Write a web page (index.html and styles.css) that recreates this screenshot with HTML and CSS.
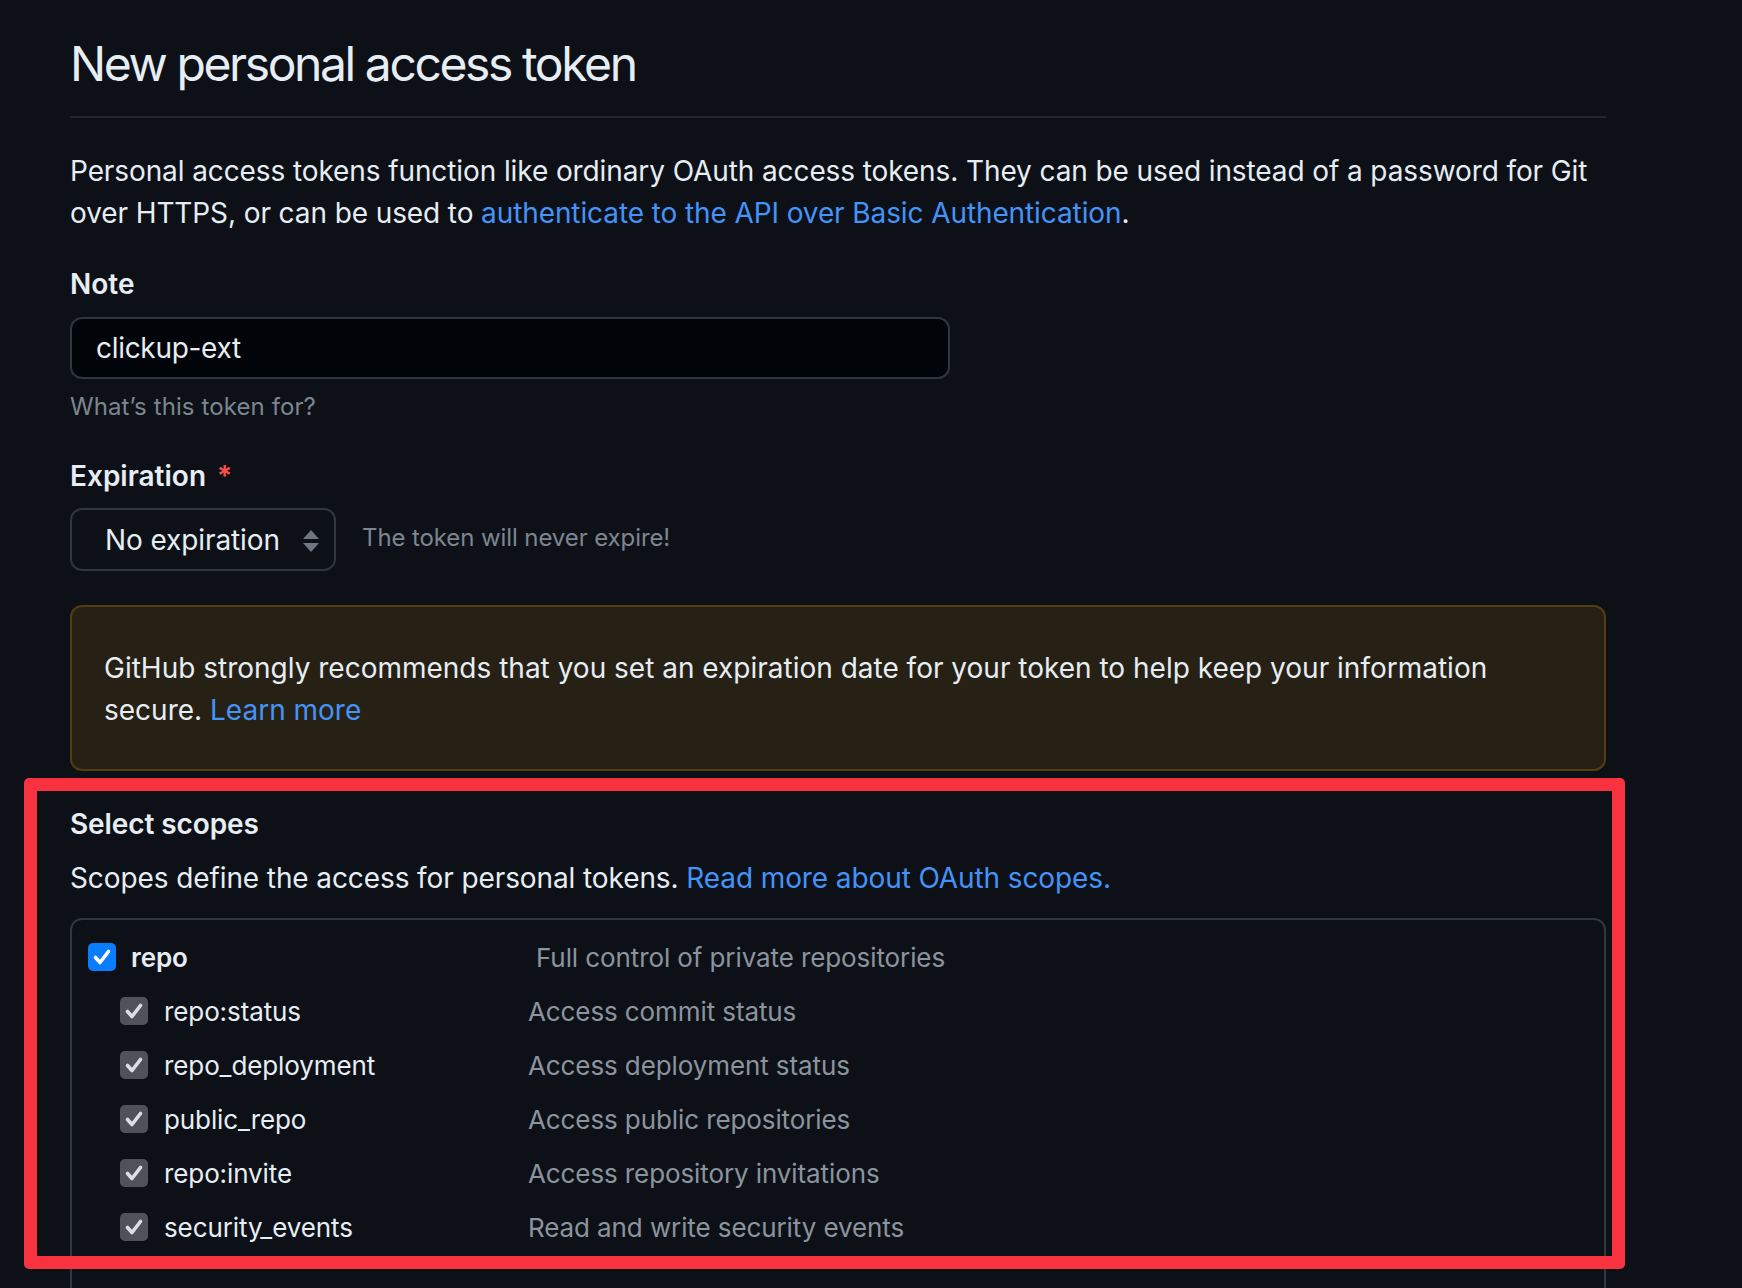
FILE: index.html
```html
<!DOCTYPE html>
<html lang="en">
<head>
<meta charset="utf-8">
<title>New personal access token</title>
<link rel="stylesheet" href="styles.css">
</head>
<body>
<main class="page">
  <h1 class="subhead">New personal access token</h1>
  <p class="lead">Personal access tokens function like ordinary OAuth access tokens. They can be used instead of a password for Git<br>over HTTPS, or can be used to <a href="#">authenticate to the API over Basic Authentication</a>.</p>

  <label class="field-label label-note">Note</label>
  <div class="input">clickup-ext</div>
  <p class="note">What’s this token for?</p>

  <label class="field-label label-exp">Expiration <span class="req">*</span></label>
  <div class="exp-row">
    <div class="select">
      <span>No expiration</span>
      <svg class="arrows" width="16" height="22" viewBox="0 0 16 22"><path d="M8 0 L16 9 L0 9 Z" fill="#6e7681"/><path d="M0 13 L16 13 L8 22 Z" fill="#6e7681"/></svg>
    </div>
    <span class="exp-note">The token will never expire!</span>
  </div>

  <div class="flash">GitHub strongly recommends that you set an expiration date for your token to help keep your information<br>secure. <a href="#">Learn more</a></div>

  <h3 class="scopes-title">Select scopes</h3>
  <p class="scopes-desc">Scopes define the access for personal tokens. <a href="#">Read more about OAuth scopes.</a></p>

  <div class="scopes">
    <div class="row row-main">
      <span class="cb cb-blue"><svg viewBox="0 0 28 28" width="28" height="28"><path d="M7.5 14.5 L12 19.5 L20.5 8.5" fill="none" stroke="#fff" stroke-width="3.6" stroke-linecap="round" stroke-linejoin="round"/></svg></span>
      <span class="name name-main">repo</span>
      <span class="desc">Full control of private repositories</span>
    </div>
    <div class="row row-sub">
      <span class="cb cb-gray"><svg viewBox="0 0 28 28" width="28" height="28"><path d="M7.5 14.5 L12 19.5 L20.5 8.5" fill="none" stroke="#dcdee2" stroke-width="3.6" stroke-linecap="round" stroke-linejoin="round"/></svg></span>
      <span class="name">repo:status</span>
      <span class="desc">Access commit status</span>
    </div>
    <div class="row row-sub">
      <span class="cb cb-gray"><svg viewBox="0 0 28 28" width="28" height="28"><path d="M7.5 14.5 L12 19.5 L20.5 8.5" fill="none" stroke="#dcdee2" stroke-width="3.6" stroke-linecap="round" stroke-linejoin="round"/></svg></span>
      <span class="name">repo_deployment</span>
      <span class="desc">Access deployment status</span>
    </div>
    <div class="row row-sub">
      <span class="cb cb-gray"><svg viewBox="0 0 28 28" width="28" height="28"><path d="M7.5 14.5 L12 19.5 L20.5 8.5" fill="none" stroke="#dcdee2" stroke-width="3.6" stroke-linecap="round" stroke-linejoin="round"/></svg></span>
      <span class="name">public_repo</span>
      <span class="desc">Access public repositories</span>
    </div>
    <div class="row row-sub">
      <span class="cb cb-gray"><svg viewBox="0 0 28 28" width="28" height="28"><path d="M7.5 14.5 L12 19.5 L20.5 8.5" fill="none" stroke="#dcdee2" stroke-width="3.6" stroke-linecap="round" stroke-linejoin="round"/></svg></span>
      <span class="name">repo:invite</span>
      <span class="desc">Access repository invitations</span>
    </div>
    <div class="row row-sub">
      <span class="cb cb-gray"><svg viewBox="0 0 28 28" width="28" height="28"><path d="M7.5 14.5 L12 19.5 L20.5 8.5" fill="none" stroke="#dcdee2" stroke-width="3.6" stroke-linecap="round" stroke-linejoin="round"/></svg></span>
      <span class="name">security_events</span>
      <span class="desc">Read and write security events</span>
    </div>
  </div>

  <div class="highlight" aria-hidden="true"></div>
</main>
</body>
</html>
```

FILE: styles.css
```css
html, body {
  margin: 0;
  padding: 0;
  background: #0d1117;
}

body {
  font-family: Inter, "Liberation Sans", sans-serif;
  color: #e6edf3;
  overflow: hidden;
  height: 1288px;
}

a {
  color: #4493f8;
  text-decoration: none;
}

.page {
  position: relative;
  width: 1536px;
  padding: 28px 0 0 70px;
}

.subhead {
  margin: 0;
  font-size: 48px;
  line-height: 72px;
  font-weight: 400;
  letter-spacing: -2.4px;
  padding-bottom: 16px;
  border-bottom: 2px solid #21262d;
}

.lead {
  margin: 32px 0 0;
  font-size: 28px;
  line-height: 42px;
  letter-spacing: -0.1px;
}

.field-label {
  display: block;
  font-size: 28px;
  line-height: 42px;
  font-weight: 600;
  letter-spacing: 0;
}

.label-note { margin-top: 29px; }
.label-exp { margin-top: 30px; }

.req { color: #f85149; margin-left: 4px; }

.input {
  margin-top: 12px;
  width: 880px;
  height: 62px;
  box-sizing: border-box;
  background: #010409;
  border: 2px solid #30363d;
  border-radius: 12px;
  padding: 0 24px;
  font-size: 28px;
  line-height: 58px;
  letter-spacing: -0.3px;
}

.note {
  margin: 10px 0 0;
  font-size: 24px;
  line-height: 36px;
  color: #7d8590;
  letter-spacing: 0.1px;
}

.exp-row {
  margin-top: 11px;
  display: flex;
  align-items: center;
  gap: 26px;
}

.select {
  width: 266px;
  height: 63px;
  box-sizing: border-box;
  border: 2px solid #30363d;
  border-radius: 12px;
  display: flex;
  align-items: center;
  justify-content: space-between;
  padding: 0 15px 0 33px;
  font-size: 28px;
  letter-spacing: -0.1px;
}

.arrows { display: block; margin-top: 2px; }

.exp-note {
  font-size: 24px;
  color: #7d8590;
  letter-spacing: -0.1px;
  margin-top: -4px;
}

.flash {
  margin-top: 34px;
  box-sizing: border-box;
  background: #272115;
  border: 2px solid #533d11;
  border-radius: 12px;
  padding: 40px 32px 38px;
  font-size: 28px;
  line-height: 42px;
  letter-spacing: 0;
}

.scopes-title {
  margin: 32px 0 0;
  font-size: 28px;
  line-height: 42px;
  font-weight: 600;
  letter-spacing: -0.1px;
}

.scopes-desc {
  margin: 12px 0 0;
  font-size: 28px;
  line-height: 42px;
  letter-spacing: -0.1px;
}

.scopes {
  margin-top: 19px;
  border: 2px solid #30363d;
  border-radius: 12px;
  padding: 10px 16px 200px;
}

.row {
  display: flex;
  align-items: center;
  height: 54px;
  font-size: 26px;
  letter-spacing: -0.1px;
}

.row-sub { padding-left: 32px; }

.cb {
  width: 28px;
  height: 28px;
  border-radius: 5px;
  flex: none;
  display: block;
}
.cb svg { display: block; }
.cb-blue { background: #0a7cff; }
.cb-gray { background: #50525a; }

.name {
  color: #e6edf3;
  margin-left: 16px;
  width: 364px;
}

.name-main {
  font-weight: 600;
  margin-left: 15px;
  width: 405px;
}

.desc { color: #8b949e; }

.highlight {
  position: absolute;
  left: 24px;
  top: 778px;
  width: 1601px;
  height: 491px;
  box-sizing: border-box;
  border: 13px solid #f9323f;
  border-radius: 5px;
  pointer-events: none;
}
```
